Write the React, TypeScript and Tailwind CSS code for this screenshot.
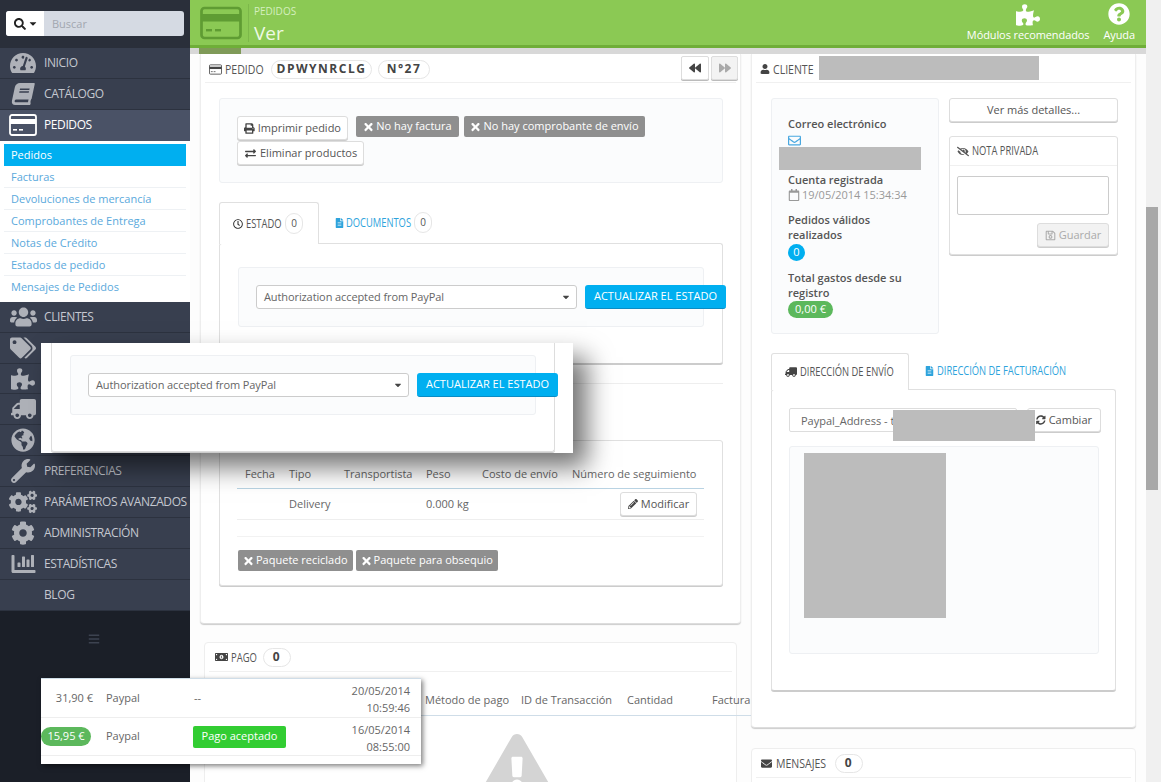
import type { ReactNode } from "react";
import {
  FaBackward,
  FaBars,
  FaBook,
  FaCaretDown,
  FaChartBar,
  FaCog,
  FaCogs,
  FaEnvelope,
  FaExchangeAlt,
  FaExclamationTriangle,
  FaEyeSlash,
  FaFileAlt,
  FaForward,
  FaGlobeAmericas,
  FaMoneyBillAlt,
  FaPencilAlt,
  FaPrint,
  FaPuzzlePiece,
  FaQuestionCircle,
  FaRegCalendar,
  FaRegClock,
  FaRegEnvelope,
  FaRegSave,
  FaSearch,
  FaSyncAlt,
  FaTachometerAlt,
  FaTags,
  FaTimes,
  FaTruck,
  FaUser,
  FaUsers,
  FaWrench,
} from "react-icons/fa";

function CardIcon({ className }: { className: string }) {
  return (
    <svg viewBox="0 0 28 22" className={className} fill="none">
      <rect x="1" y="1" width="26" height="20" rx="2" stroke="currentColor" strokeWidth="1.8" />
      <rect x="1" y="5" width="26" height="5" fill="currentColor" />
      <rect x="4" y="15" width="4" height="1.6" fill="currentColor" />
      <rect x="10" y="15" width="4" height="1.6" fill="currentColor" />
    </svg>
  );
}

// no hay fuente condensada instalada: se estrecha la Open Sans
function Narrow({ className, children }: { className: string; children: ReactNode }) {
  return <span className={`inline-block origin-left scale-x-[.78] whitespace-nowrap ${className}`}>{children}</span>;
}

const menuTop = [
  { name: "INICIO", icon: <FaTachometerAlt className="h-[24px] w-[26px]" /> },
  { name: "CATÁLOGO", icon: <FaBook className="h-[22px] w-[24px] -skew-x-12" /> },
];

const menuBottom = [
  { name: "CLIENTES", icon: <FaUsers className="h-[26px] w-[27px]" /> },
  { name: "", icon: <FaTags className="h-[24px] w-[26px]" /> },
  { name: "", icon: <FaPuzzlePiece className="h-[24px] w-[24px]" /> },
  { name: "", icon: <FaTruck className="h-[22px] w-[25px] -scale-x-100" /> },
  { name: "", icon: <FaGlobeAmericas className="h-[24px] w-[24px]" /> },
  { name: "PREFERENCIAS", icon: <FaWrench className="h-[24px] w-[24px]" /> },
  { name: "PARÁMETROS AVANZADOS", icon: <FaCogs className="h-[26px] w-[28px]" /> },
  { name: "ADMINISTRACIÓN", icon: <FaCog className="h-[24px] w-[24px]" /> },
  { name: "ESTADÍSTICAS", icon: <FaChartBar className="h-[24px] w-[27px]" /> },
  { name: "BLOG", icon: null },
];

const subMenu = [
  "Facturas",
  "Devoluciones de mercancía",
  "Comprobantes de Entrega",
  "Notas de Crédito",
  "Estados de pedido",
  "Mensajes de Pedidos",
];

function MenuItem({ name, icon }: { name: string; icon: ReactNode }) {
  return (
    <div className="flex h-[30.9px] items-center border-b border-[#2c323f] bg-[#383f4f] text-[12px] tracking-[-0.4px] text-[#c5c8d0]">
      <span className="flex w-[44px] shrink-0 justify-center pl-[2px] text-[#aeb1b8]">{icon}</span>
      <span className="whitespace-nowrap">{name}</span>
    </div>
  );
}

function Sidebar() {
  return (
    <aside className="flex h-full w-[190px] shrink-0 flex-col bg-[#1b1f28]">
      <div className="h-[48px] bg-[#2a2f3a] px-[6px] pt-[11px]">
        <div className="flex h-[25px] overflow-hidden rounded-[3px] bg-[#d5dae3]">
          <span className="flex w-[38px] items-center justify-center gap-[3px] bg-white text-[#222]">
            <FaSearch className="h-[12px] w-[12px]" />
            <FaCaretDown className="h-[11px] w-[8px]" />
          </span>
          <span className="pl-[8px] text-[11px] leading-[25px] text-[#a2a7b0]">Buscar</span>
        </div>
      </div>
      {menuTop.map((m) => (
        <MenuItem key={m.name} name={m.name} icon={m.icon} />
      ))}
      <div className="flex h-[31px] items-center bg-[#4a5266] text-[12px] tracking-[-0.4px] text-white">
        <span className="flex w-[44px] shrink-0 justify-center pl-[2px]">
          <CardIcon className="h-[22px] w-[28px]" />
        </span>
        PEDIDOS
      </div>
      <div className="h-[161px] bg-white pl-[4px] pr-[4px] pt-[3px] text-[11px]">
        <div className="h-[22px] bg-[#00aff0] pl-[7px] leading-[22px] text-white">Pedidos</div>
        {subMenu.map((s) => (
          <div key={s} className="h-[22px] border-b border-[#eef1f4] pl-[7px] leading-[22px] text-[#5aa9dc] last:border-b-0">
            {s}
          </div>
        ))}
      </div>
      {menuBottom.map((m, i) => (
        <MenuItem key={i} name={m.name} icon={m.icon} />
      ))}
      <div className="mt-[22px] flex justify-center pr-[2px] text-[#3d4350]">
        <FaBars className="h-[12px] w-[12px]" />
      </div>
    </aside>
  );
}

function Pill({ children, className }: { children: ReactNode; className: string }) {
  return (
    <span className={`flex h-[19px] items-center justify-center rounded-full border border-[#e6e6e6] text-[12px] font-bold tracking-[1.5px] text-[#444] ${className}`}>
      {children}
    </span>
  );
}

function Count({ n }: { n: number }) {
  return (
    <span className="flex h-[21px] w-[18px] items-center justify-center rounded-full border border-[#e6e6e6] text-[10px] text-[#555]">
      {n}
    </span>
  );
}

function GrayLabel({ children, className = "" }: { children: ReactNode; className?: string }) {
  return (
    <span className={`flex h-[21px] items-center justify-center gap-[2px] whitespace-nowrap rounded-[2px] bg-[#8f8f8f] px-[5px] text-[11px] text-white ${className}`}>
      <FaTimes className="h-[12px] w-[11px]" />
      {children}
    </span>
  );
}

function WhiteBtn({ icon, children, className = "" }: { icon?: ReactNode; children: ReactNode; className?: string }) {
  return (
    <span className={`flex h-[24px] items-center justify-center gap-[3px] whitespace-nowrap rounded-[3px] border border-[#ddd] bg-white px-[6px] text-[11px] text-[#555] shadow-[0_1px_0_#ccc] ${className}`}>
      {icon}
      {children}
    </span>
  );
}

function StatusWell({ className = "" }: { className?: string }) {
  return (
    <div className={`h-[60px] rounded-[3px] border border-[#eef0f3] bg-[#fbfcfd] ${className}`}>
      <div className="ml-[17px] mt-[17px] flex w-[488px] items-center">
        <div className="flex h-[24px] w-[321px] shrink-0 items-center justify-between rounded-[3px] border border-[#ccc] bg-white pl-[7px] pr-[6px] text-[11px] tracking-[-0.1px] text-[#666]">
          Authorization accepted from PayPal
          <FaCaretDown className="h-[10px] w-[8px] text-[#444]" />
        </div>
        <span className="ml-[8px] flex h-[24px] w-[141px] shrink-0 items-center justify-center whitespace-nowrap rounded-[3px] border-b border-[#0a8cc4] bg-[#00aff0] text-[11px] text-white">
          ACTUALIZAR EL ESTADO
        </span>
      </div>
    </div>
  );
}

function PanelTitle({ children, className = "" }: { children: ReactNode; className?: string }) {
  return <div className={`flex h-[29px] items-center border-b border-[#f0f0f0] text-[13.5px] text-[#555] ${className}`}>{children}</div>;
}

function Tab({ active, children, className = "" }: { active?: boolean; children: ReactNode; className?: string }) {
  return (
    <span
      className={`flex items-center whitespace-nowrap rounded-t-[3px] text-[12px] ${
        active ? "relative z-10 -mb-px border border-b-0 border-[#e0e0e0] bg-white text-[#555]" : "text-[#2ea3dc]"
      } ${className}`}
    >
      {children}
    </span>
  );
}

function LeftColumn() {
  return (
    <div className="ml-[10px] flex w-[541px] shrink-0 flex-col">
      <section className="h-[570px] rounded-b-[4px] border border-t-0 border-[#eee] border-b-[#ddd] bg-white shadow-[0_1px_1px_#ccc]">
        <PanelTitle className="mx-[4px] pl-[4px] pt-[2px]">
          <CardIcon className="mr-[3px] h-[11px] w-[13px] shrink-0 text-[#444]" />
          <Narrow className="w-[37px]">PEDIDO</Narrow>
          <span className="ml-[9px] flex gap-[6px]">
            <Pill className="w-[101px]">DPWYNRCLG</Pill>
            <Pill className="w-[52px]">N°27</Pill>
          </span>
          <span className="-mr-[2px] -mt-[2px] ml-auto flex gap-[2px] text-[#444]">
            <span className="flex h-[24px] w-[28px] items-center justify-center rounded-[2px] border border-[#ddd] bg-white shadow-[0_1px_0_#bbb]">
              <FaBackward className="h-[12px] w-[12px]" />
            </span>
            <span className="flex h-[24px] w-[27px] items-center justify-center rounded-[2px] border border-[#ddd] bg-[#f3f3f3] text-[#aaa] shadow-[0_1px_0_#bbb]">
              <FaForward className="h-[12px] w-[12px]" />
            </span>
          </span>
        </PanelTitle>

        <div className="ml-[18px] mt-[15px] w-[504px]">
          <div className="h-[85px] rounded-[3px] border border-[#eef0f3] bg-[#fbfcfd] pl-[17px] pt-[17px]">
            <div className="flex">
              <WhiteBtn icon={<FaPrint className="h-[11px] w-[11px] text-[#444]" />} className="w-[111px]">
                Imprimir pedido
              </WhiteBtn>
              <GrayLabel className="ml-[8px] w-[103px]">No hay factura</GrayLabel>
              <GrayLabel className="ml-[5px] w-[181px]">No hay comprobante de envío</GrayLabel>
            </div>
            <WhiteBtn icon={<FaExchangeAlt className="h-[11px] w-[13px] text-[#444]" />} className="mt-px w-fit">
              Eliminar productos
            </WhiteBtn>
          </div>

          <div className="mt-[19px] flex h-[41px]">
            <Tab active className="h-[42px] w-[100px] pl-[13px]">
              <FaRegClock className="mr-[3px] h-[10px] w-[10px] shrink-0 text-[#333]" />
              <Narrow className="w-[36px]">ESTADO</Narrow>
              <span className="ml-[3px]">
                <Count n={0} />
              </span>
            </Tab>
            <Tab className="ml-[16px]">
              <FaFileAlt className="mr-[2px] h-[10px] w-[9px] shrink-0" />
              <Narrow className="w-[68px]">DOCUMENTOS</Narrow>
              <Count n={0} />
            </Tab>
          </div>
          <div className="h-[121px] rounded-[3px] border border-[#e0e0e0] border-b-[#ccc] bg-white pl-[18px] pt-[23px] shadow-[0_1px_0_#ccc]">
            <StatusWell className="w-[466px]" />
          </div>

          <div className="mt-[19px] border-t border-[#eee]" />

          <div className="mt-[56px] h-[146px] rounded-[3px] border border-[#e0e0e0] bg-white pl-[17px] pr-[18px] pt-[25px] shadow-[0_1px_0_#ccc]">
            <div className="flex h-[23px] items-start whitespace-nowrap border-b border-[#b9d3e3] pl-[8px] text-[11px] text-[#666]">
              <span className="w-[44px] shrink-0">Fecha</span>
              <span className="w-[55px] shrink-0">Tipo</span>
              <span className="w-[82px] shrink-0">Transportista</span>
              <span className="w-[56px] shrink-0">Peso</span>
              <span className="w-[90px] shrink-0">Costo de envío</span>
              <span>Número de seguimiento</span>
            </div>
            <div className="flex h-[31px] items-center border-b border-[#eee] text-[11px] text-[#666]">
              <span className="ml-[52px] w-[137px] pt-[1px]">Delivery</span>
              <span className="pt-[1px]">0.000 kg</span>
              <WhiteBtn icon={<FaPencilAlt className="h-[10px] w-[10px] text-[#444]" />} className="ml-auto mr-[7px] w-[77px]">
                Modificar
              </WhiteBtn>
            </div>
            <div className="mt-[16px] flex gap-[3px] border-t border-[#f2f2f2] pl-px pt-[13px]">
              <GrayLabel>Paquete reciclado</GrayLabel>
              <GrayLabel>Paquete para obsequio</GrayLabel>
            </div>
          </div>
        </div>
      </section>

      <section className="relative ml-[4px] mt-[18px] h-[200px] w-[533px] rounded-[4px] border border-[#eee] bg-white">
        <PanelTitle className="mx-[4px] pl-[6px]">
          <FaMoneyBillAlt className="mr-[3px] h-[12px] w-[13px] shrink-0 text-[#444]" />
          <Narrow className="w-[26px] !scale-x-[.7]">PAGO</Narrow>
          <span className="ml-[6px]">
            <Pill className="w-[28px]">0</Pill>
          </span>
        </PanelTitle>
        <div className="ml-[4px] mt-[14px] flex h-[30px] w-[543px] items-end whitespace-nowrap border-b border-[#cfdde8] pb-[7px] pl-[216px] text-[11px] text-[#666]">
          <span className="w-[96px] shrink-0">Método de pago</span>
          <span className="w-[106px] shrink-0">ID de Transacción</span>
          <span className="w-[85px] shrink-0">Cantidad</span>
          <span>Factura</span>
        </div>
        <div className="mt-[18px] flex justify-center pl-[92px] text-[#d4d4d4]">
          <FaExclamationTriangle className="h-[66px] w-[74px]" />
        </div>
      </section>
    </div>
  );
}

function Gray({ className }: { className: string }) {
  return <div className={`bg-[#bcbcbc] ${className}`} />;
}

function RightColumn() {
  return (
    <div className="ml-[10px] flex w-[385px] shrink-0 flex-col">
      <section className="relative h-[674px] rounded-b-[4px] border border-t-0 border-[#eee] border-b-[#ddd] bg-white shadow-[0_1px_1px_#ccc]">
        <PanelTitle className="mx-[4px] pl-[4px] pt-[2px]">
          <FaUser className="mr-[3px] h-[10px] w-[10px] shrink-0 text-[#444]" />
          <Narrow className="w-[39px]">CLIENTE</Narrow>
          <Gray className="-mt-[2px] ml-[7px] h-[24px] w-[220px]" />
        </PanelTitle>

        <div className="mx-[19px] mt-[15px] flex gap-[10px]">
          <div className="h-[236px] w-[168px] shrink-0 rounded-[3px] border border-[#eef0f3] bg-[#fbfcfd] pl-[16px] pt-[17px] text-[11px] font-semibold leading-[15.5px] text-[#555]">
            <div>Correo electrónico</div>
            <FaRegEnvelope className="mt-[2px] h-[13px] w-[13px] text-[#4aa8e0]" />
            <Gray className="-ml-[9px] h-[23px] w-[142px]" />
            <div className="mt-[2px]">Cuenta registrada</div>
            <div className="flex items-center gap-[2px] font-normal text-[#999]">
              <FaRegCalendar className="h-[12px] w-[12px]" />
              19/05/2014 15:34:34
            </div>
            <div className="mt-[9px]">
              Pedidos válidos
              <br />
              realizados
            </div>
            <span className="mt-[1px] flex h-[17px] w-[17px] items-center justify-center rounded-full bg-[#00aff0] text-[11px] font-normal text-white">
              0
            </span>
            <div className="mt-[9px]">
              Total gastos desde su
              <br />
              registro
            </div>
            <span className="flex h-[17px] w-[45px] items-center justify-center rounded-full bg-[#5cb85c] text-[11px] font-normal text-white">
              0,00 €
            </span>
          </div>

          <div className="w-[169px] shrink-0">
            <WhiteBtn className="w-full">Ver más detalles...</WhiteBtn>
            <div className="mt-[14px] h-[119px] rounded-[3px] border border-[#e0e0e0] bg-white shadow-[0_1px_0_#ccc]">
              <div className="flex h-[29px] items-center gap-[3px] border-b border-[#f0f0f0] pl-[7px] text-[12px] text-[#555]">
                <FaEyeSlash className="h-[11px] w-[12px] shrink-0" />
                <Narrow className="w-[68px]">NOTA PRIVADA</Narrow>
              </div>
              <div className="ml-[7px] mt-[10px] h-[39px] w-[152px] rounded-[2px] border border-[#ccc] bg-white" />
              <WhiteBtn
                icon={<FaRegSave className="h-[11px] w-[11px]" />}
                className="ml-[87px] mt-[8px] w-[72px] border-[#ccc] !bg-[#f2f2f2] !px-0 text-[#aaa]"
              >
                Guardar
              </WhiteBtn>
            </div>
          </div>
        </div>

        <div className="mx-[19px] mt-[19px]">
          <div className="flex h-[36px]">
            <Tab active className="h-[37px] w-[138px] pl-[13px]">
              <FaTruck className="mr-[3px] h-[10px] w-[12px] shrink-0 -scale-x-100 text-[#444]" />
              <Narrow className="w-[94px]">DIRECCIÓN DE ENVÍO</Narrow>
            </Tab>
            <Tab className="ml-[16px]">
              <FaFileAlt className="mr-[3px] h-[10px] w-[9px] shrink-0" />
              <Narrow className="w-[131px]">DIRECCIÓN DE FACTURACIÓN</Narrow>
            </Tab>
          </div>
          <div className="relative h-[302px] rounded-[3px] border border-[#e0e0e0] border-b-[#ccc] bg-white pl-[17px] pr-[17px] pt-[18px] shadow-[0_1px_0_#ccc]">
            <div className="flex items-center">
              <div className="h-[24px] w-[228px] shrink-0 rounded-[2px] border border-[#ddd] bg-white pl-[11px] text-[11px] leading-[24px] text-[#666]">
                Paypal_Address - t
              </div>
              <WhiteBtn
                icon={<FaSyncAlt className="h-[10px] w-[10px] text-[#444]" />}
                className="ml-[10px] w-[74px] shrink-0 justify-end !px-[8px]"
              >
                Cambiar
              </WhiteBtn>
            </div>
            <Gray className="absolute left-[121px] top-[20px] h-[31px] w-[142px]" />
            <div className="mt-[14px] h-[208px] w-[310px] rounded-[3px] border border-[#eef0f3] bg-[#fbfcfd] pl-[14px] pt-[6px]">
              <Gray className="h-[165px] w-[142px]" />
            </div>
          </div>
        </div>
      </section>

      <section className="mt-[20px] h-[60px] rounded-[4px] border border-[#eee] bg-white">
        <PanelTitle className="mx-[4px] pl-[4px]">
          <FaEnvelope className="mr-[3px] h-[11px] w-[13px] shrink-0 text-[#444]" />
          <Narrow className="w-[51px]">MENSAJES</Narrow>
          <span className="ml-[8px]">
            <Pill className="w-[28px]">0</Pill>
          </span>
        </PanelTitle>
      </section>
    </div>
  );
}

function TopBar() {
  return (
    <header className="relative h-[48px] shrink-0 border-b-[3px] border-[#6fae38] bg-[#8bc954]">
      <div className="flex h-full items-center pl-[10px]">
        <CardIcon className="h-[34px] w-[42px] text-[#5f9c33]" />
        <div className="ml-[6px] h-[38px] border-l border-[#7cb84a] pl-[5px] text-[#d5efbf]">
          <div className="text-[10px] leading-[14px]">PEDIDOS</div>
          <div className="mt-[4px] text-[19px] leading-[22px] text-[#eef9e4]">Ver</div>
        </div>
        <div className="ml-auto flex gap-[14px] pr-[11px] text-[11px] tracking-[-0.1px] text-white">
          <div className="flex flex-col items-center">
            <FaPuzzlePiece className="h-[24px] w-[24px]" />
            <span className="mt-[1px] leading-[14px]">Módulos recomendados</span>
          </div>
          <div className="flex flex-col items-center">
            <FaQuestionCircle className="h-[22px] w-[22px]" />
            <span className="mt-[3px] leading-[14px]">Ayuda</span>
          </div>
        </div>
      </div>
    </header>
  );
}

export default function App() {
  return (
    <div className="relative flex h-[782px] w-[1161px] overflow-hidden bg-white font-['Open_Sans',sans-serif]">
      <Sidebar />
      <main className="flex h-full w-[956px] shrink-0 flex-col bg-[#fdfdfd]">
        <TopBar />
        <div className="h-[6px] shrink-0 bg-[#d8d8d8] pl-[9px]">
          <div className="h-full w-[42px] bg-[#7f9a58]" />
        </div>
        <div className="flex">
          <LeftColumn />
          <RightColumn />
        </div>
      </main>
      <div className="h-full w-[15px] bg-[#f0f0f0] pt-[207px]">
        <div className="h-[283px] w-[12px] bg-[#a8a8a8]" />
      </div>

      {/* recortes pegados encima */}
      <div className="absolute left-[41px] top-[343px] h-[110px] w-[532px] bg-white pl-[10px] shadow-[14px_14px_24px_rgba(0,0,0,0.55)]">
        <div className="h-[109px] w-[504px] rounded-b-[3px] border border-t-0 border-[#ddd] pl-[18px] pt-[12px] shadow-[0_1px_0_#ccc]">
          <StatusWell className="w-[466px]" />
        </div>
      </div>
      <div className="absolute left-[41px] top-[678px] h-[86px] w-[380px] border-t border-[#cfdde8] bg-white text-[11px] text-[#666] shadow-[2px_2px_5px_rgba(0,0,0,0.5)]">
        <div className="flex h-[39px] items-center border-b border-[#eee]">
          <span className="w-[52px] text-right">31,90 €</span>
          <span className="ml-[13px] w-[88px]">Paypal</span>
          <span className="w-[40px]">--</span>
          <span className="ml-auto pr-[11px] pt-[2px] text-right leading-[17px]">
            20/05/2014
            <br />
            10:59:46
          </span>
        </div>
        <div className="flex h-[38px] items-center border-b border-[#eee]">
          <span className="flex h-[19px] w-[50px] items-center justify-center rounded-full bg-[#5cb85c] text-white">15,95 €</span>
          <span className="ml-[15px] w-[87px]">Paypal</span>
          <span className="flex h-[22px] w-[93px] items-center justify-center rounded-[2px] bg-[#32cd32] text-white">Pago aceptado</span>
          <span className="ml-auto pr-[11px] pt-[2px] text-right leading-[17px]">
            16/05/2014
            <br />
            08:55:00
          </span>
        </div>
      </div>
    </div>
  );
}
